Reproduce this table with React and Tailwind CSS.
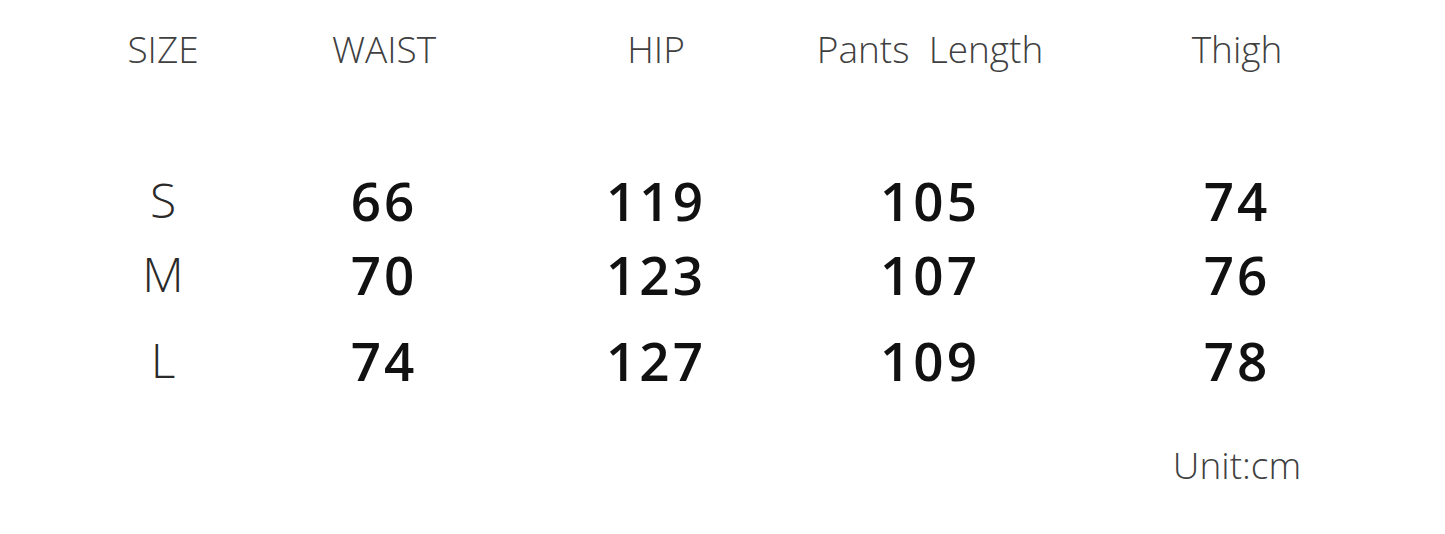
const headers = ['SIZE', 'WAIST', 'HIP', 'Pants  Length', 'Thigh'];

const rows = [
  { size: 'S', values: ['66', '119', '105', '74'], gap: 'mt-0' },
  { size: 'M', values: ['70', '123', '107', '76'], gap: 'mt-[20px]' },
  { size: 'L', values: ['74', '127', '109', '78'], gap: 'mt-[32px]' },
];

const grid = 'grid grid-cols-[200px_242px_302px_246px_368px] items-center text-center';

export default function App() {
  return (
    <div className="w-[1445px] h-[534px] bg-white pl-[63px] pt-[22px] overflow-hidden font-['Open_Sans',sans-serif]">
      <div className={`${grid} h-[52px] text-[37px] font-light text-[#404040]`}>
        {headers.map((h) => (
          <div key={h} className="whitespace-pre leading-none">{h}</div>
        ))}
      </div>

      <div className="mt-[99px] flex flex-col">
        {rows.map((r) => (
          <div key={r.size} className={`${grid} h-[54px] ${r.gap}`}>
            <div className="text-[48px] font-light text-[#2a2a2a] leading-none">{r.size}</div>
            {r.values.map((v, i) => (
              <div key={i} className="text-[53px] font-semibold tracking-[3px] text-[#111] leading-none">{v}</div>
            ))}
          </div>
        ))}
      </div>

      <div className={`${grid} mt-[59px]`}>
        <div className="col-start-5 text-[37px] font-light text-[#404040] leading-none">Unit:cm</div>
      </div>
    </div>
  );
}
